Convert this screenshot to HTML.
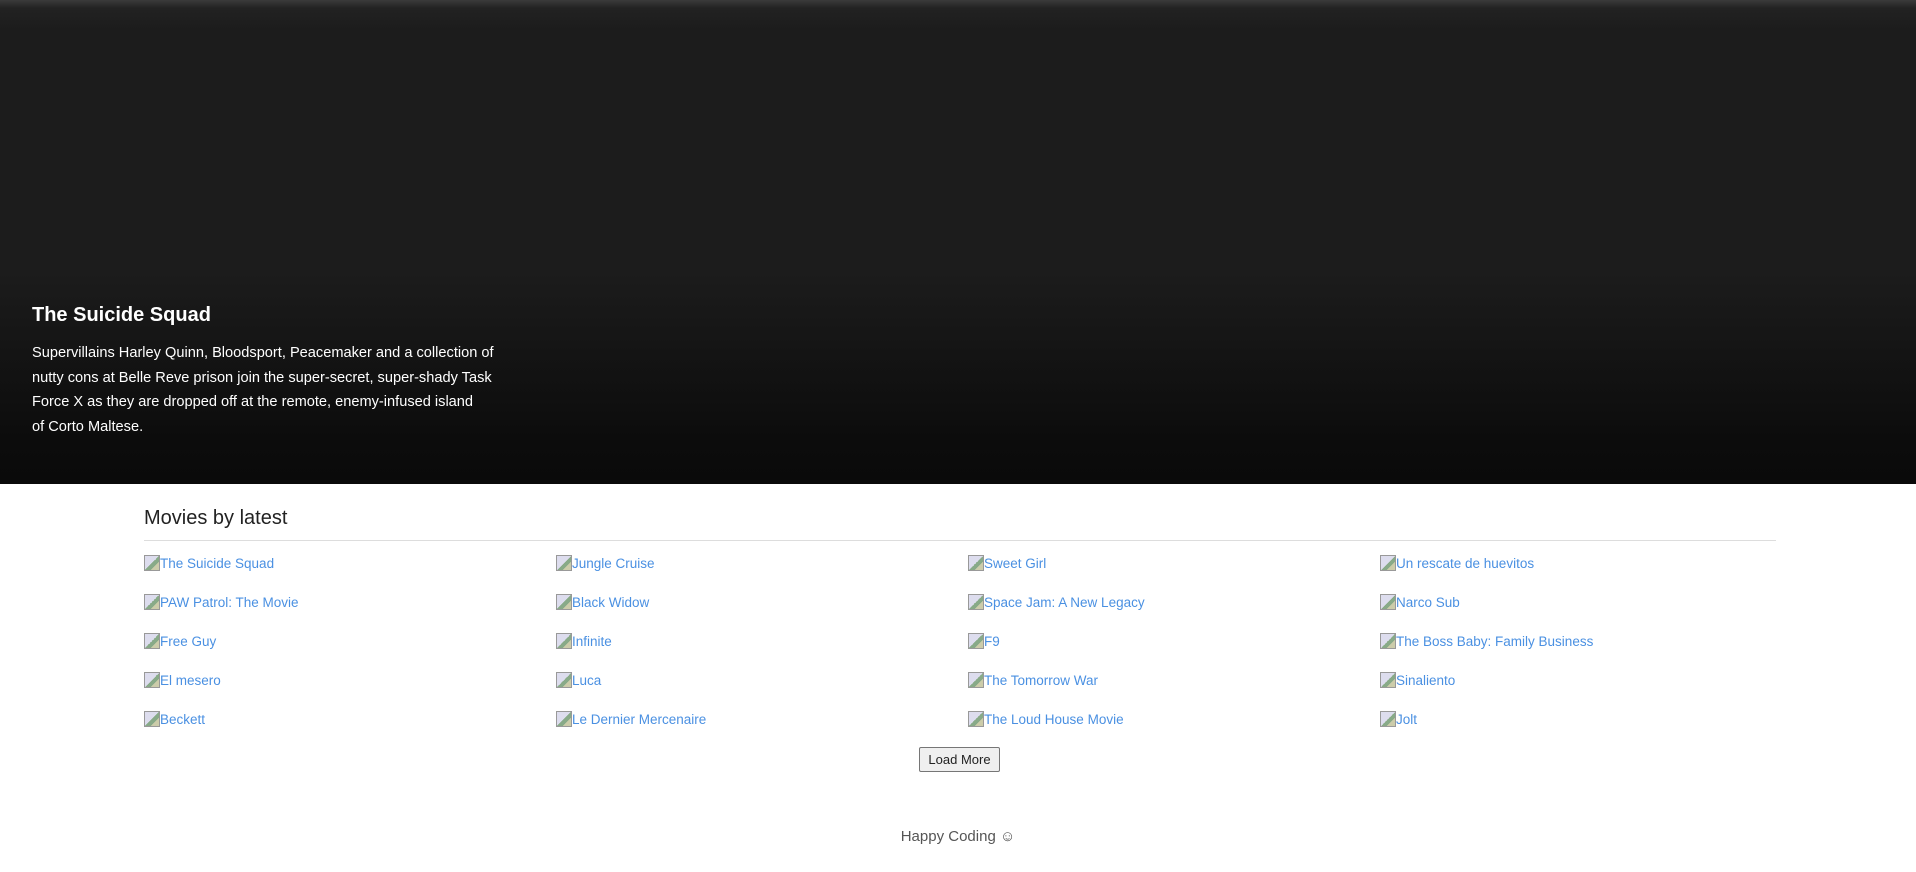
<!DOCTYPE html>
<html><head><meta charset="utf-8"><style>
*{margin:0;padding:0;box-sizing:border-box}
body{width:1916px;height:872px;overflow:hidden;background:#fff;font-family:"Liberation Sans",sans-serif}
.hero{position:absolute;left:0;top:0;width:1916px;height:484px;background:linear-gradient(#3a3a3a 0px,#222 8px,#1c1c1c 30px,#1c1c1c 270px,#0c0c0c 440px,#0a0a0a 484px)}
.hero h1{position:absolute;left:32px;top:304px;font-size:20px;font-weight:bold;color:#fff}
.hero p{position:absolute;left:32px;top:341px;width:600px;font-size:14.6px;line-height:24.5px;color:#fff;white-space:nowrap}
.sec{position:absolute;left:144px;top:500px;width:1632px}
.sec h2{font-size:20px;font-weight:normal;color:#222;height:40px;line-height:36px}
.hr{height:1px;background:#aaa;border-bottom:1px solid #ddd}
.grid{position:absolute;top:55px;left:0;width:1632px}
.it{position:absolute;font-size:13.5px;color:#4a90e2;white-space:nowrap;height:18px;line-height:18px}
.ic{display:inline-block;width:16px;height:16px;vertical-align:-3px;background:linear-gradient(135deg,#dde 0 50%,#8a8 50% 70%,#cca 70%);border:1px solid #999}
button{position:absolute;left:919px;top:747px;width:81px;height:25px;font-family:"Liberation Sans",sans-serif;font-size:13px;color:#222;background:#efefef;border:1px solid #767676;border-radius:2px}
.ft{position:absolute;left:0;width:1916px;top:828px;text-align:center;font-size:15px;color:#555}
</style></head><body>
<div class="hero"><h1>The Suicide Squad</h1><p>Supervillains Harley Quinn, Bloodsport, Peacemaker and a collection of<br>nutty cons at Belle Reve prison join the super-secret, super-shady Task<br>Force X as they are dropped off at the remote, enemy-infused island<br>of Corto Maltese.</p></div>
<div class="sec"><h2>Movies by latest</h2><div class="hr"></div>
<div class="grid">
<div class="it" style="left:0;top:0"><span class="ic"></span>The Suicide Squad</div>
<div class="it" style="left:412px;top:0"><span class="ic"></span>Jungle Cruise</div>
<div class="it" style="left:824px;top:0"><span class="ic"></span>Sweet Girl</div>
<div class="it" style="left:1236px;top:0"><span class="ic"></span>Un rescate de huevitos</div>
<div class="it" style="left:0;top:39px"><span class="ic"></span>PAW Patrol: The Movie</div>
<div class="it" style="left:412px;top:39px"><span class="ic"></span>Black Widow</div>
<div class="it" style="left:824px;top:39px"><span class="ic"></span>Space Jam: A New Legacy</div>
<div class="it" style="left:1236px;top:39px"><span class="ic"></span>Narco Sub</div>
<div class="it" style="left:0;top:78px"><span class="ic"></span>Free Guy</div>
<div class="it" style="left:412px;top:78px"><span class="ic"></span>Infinite</div>
<div class="it" style="left:824px;top:78px"><span class="ic"></span>F9</div>
<div class="it" style="left:1236px;top:78px"><span class="ic"></span>The Boss Baby: Family Business</div>
<div class="it" style="left:0;top:117px"><span class="ic"></span>El mesero</div>
<div class="it" style="left:412px;top:117px"><span class="ic"></span>Luca</div>
<div class="it" style="left:824px;top:117px"><span class="ic"></span>The Tomorrow War</div>
<div class="it" style="left:1236px;top:117px"><span class="ic"></span>Sinaliento</div>
<div class="it" style="left:0;top:156px"><span class="ic"></span>Beckett</div>
<div class="it" style="left:412px;top:156px"><span class="ic"></span>Le Dernier Mercenaire</div>
<div class="it" style="left:824px;top:156px"><span class="ic"></span>The Loud House Movie</div>
<div class="it" style="left:1236px;top:156px"><span class="ic"></span>Jolt</div>
</div></div>
<button>Load More</button>
<div class="ft">Happy Coding ☺</div>
</body></html>
